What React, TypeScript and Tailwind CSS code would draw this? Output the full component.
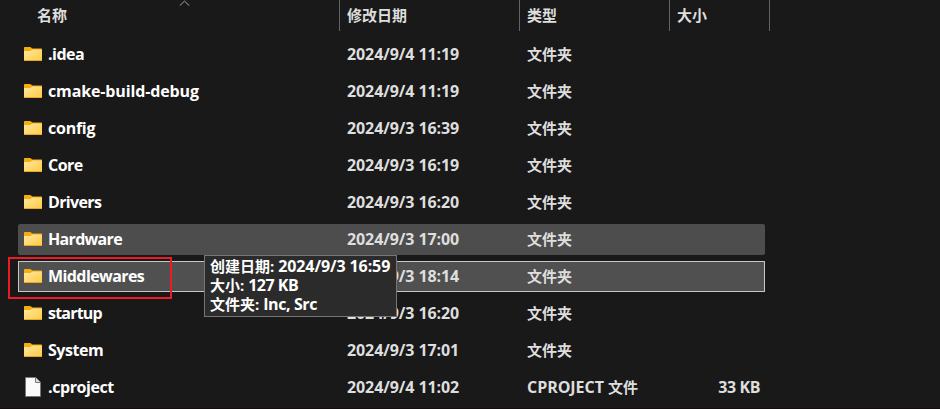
type Entry = {
  name: string;
  date: string;
  type: string;
  extension?: string;
  size?: string;
  state?: 'hover' | 'focus';
  tracking?: string;
};

const entries: Entry[] = [
  { name: '.idea', date: '2024/9/4 11:19', type: '文件夹', tracking: 'tracking-[-0.5px]' },
  { name: 'cmake-build-debug', date: '2024/9/4 11:19', type: '文件夹', tracking: 'tracking-[-0.13px]' },
  { name: 'config', date: '2024/9/3 16:39', type: '文件夹', tracking: 'tracking-[-0.25px]' },
  { name: 'Core', date: '2024/9/3 16:19', type: '文件夹', tracking: 'tracking-[-0.5px]' },
  { name: 'Drivers', date: '2024/9/3 16:20', type: '文件夹', tracking: 'tracking-[-0.65px]' },
  { name: 'Hardware', date: '2024/9/3 17:00', type: '文件夹', state: 'hover', tracking: 'tracking-[-0.68px]' },
  { name: 'Middlewares', date: '2024/9/3 18:14', type: '文件夹', state: 'focus', tracking: 'tracking-[-0.58px]' },
  { name: 'startup', date: '2024/9/3 16:20', type: '文件夹', tracking: 'tracking-[-0.8px]' },
  { name: 'System', date: '2024/9/3 17:01', type: '文件夹', tracking: 'tracking-[-0.45px]' },
  {
    name: '.cproject',
    date: '2024/9/4 11:02',
    type: '文件',
    extension: 'CPROJECT',
    size: '33 KB',
    tracking: 'tracking-[-0.42px]',
  },
];

function FolderIcon() {
  return (
    <svg width="18" height="14" viewBox="0 0 18 14" className="block">
      <defs>
        <linearGradient id="folder" x1="0" y1="0" x2="1" y2="1">
          <stop offset="0" stopColor="#ffe7a2" />
          <stop offset="1" stopColor="#ffcb3f" />
        </linearGradient>
      </defs>
      <path d="M0 .7Q0 0 .7 0H6.4L8.2 1.5H17.3Q18 1.5 18 2.2V6H0Z" fill="#f5ad12" />
      <path d="M0 4H6.3L8.2 2.6H18V13.3Q18 14 17.3 14H.7Q0 14 0 13.3Z" fill="url(#folder)" />
      <path d="M0 13H18V13.4Q18 14 17.3 14H.7Q0 14 0 13.4Z" fill="#e9a825" />
    </svg>
  );
}

function FileIcon() {
  return (
    <svg width="16" height="20" viewBox="0 0 16 20" className="ml-px block">
      <path d="M.5 .5H10.7L15.5 5.3V19.5H.5Z" fill="#fafafa" stroke="#777" />
      <path d="M10.5 .5V5.5H15.5" fill="#dedede" stroke="#777" />
    </svg>
  );
}

function Header() {
  return (
    <div className="flex h-[31px] leading-[30px]">
      <div className="relative w-[340px] border-r border-[#636363] pl-[37px]">
        名称
        <svg width="11" height="6" viewBox="0 0 11 6" className="absolute left-[179px] top-0">
          <path d="M.7 5.7L5.5 1.1L10.3 5.7" fill="none" stroke="#a5a5a5" />
        </svg>
      </div>
      <div className="w-[180px] border-r border-[#636363] pl-[7px]">修改日期</div>
      <div className="w-[150px] border-r border-[#636363] pl-[7px]">类型</div>
      <div className="w-[100px] border-r border-[#636363] pl-[7px]">大小</div>
    </div>
  );
}

function Row({ entry }: { entry: Entry }) {
  const base = 'flex h-[31px] items-center border pb-px leading-[20px] ';
  const look =
    entry.state === 'hover'
      ? 'rounded-[2px] border-[#4d4d4d] bg-[#4d4d4d]'
      : entry.state === 'focus'
        ? 'border-[#c8c8c8] bg-[#505050]'
        : 'border-transparent';
  return (
    <div className={base + look}>
      <div className="ml-[5px] w-6 shrink-0">{entry.size ? <FileIcon /> : <FolderIcon />}</div>
      <div className={'w-[299px] shrink-0 text-[16px] font-[660] text-white ' + (entry.tracking ?? '')}>{entry.name}</div>
      <div className="w-[180px] shrink-0 text-[16px] font-[660] tracking-[-0.09px]">{entry.date}</div>
      <div className="w-[150px] shrink-0">
        {entry.extension && <span className="text-[16px] font-[660] tracking-[-0.05px]">{entry.extension} </span>}
        {entry.type}
      </div>
      <div className="w-[83px] shrink-0 text-right text-[16px] font-[660] tracking-[-0.4px]">{entry.size}</div>
    </div>
  );
}

export default function App() {
  return (
    <div className="relative h-[409px] w-[940px] overflow-hidden whitespace-nowrap border-b border-[#140d10] bg-[#191919] font-['Open_Sans','Noto_Sans_CJK_SC',sans-serif] text-[15px] font-bold text-[#dedede]">
      <Header />
      <div className="ml-[18px] mt-2 flex w-[747px] flex-col gap-1.5">
        {entries.map((entry) => (
          <Row key={entry.name} entry={entry} />
        ))}
      </div>
      <div className="absolute left-2 top-[257px] h-[42px] w-[164px] border-2 border-[#ed1c24]" />
      <div className="absolute left-[204px] top-[255px] h-[62px] w-[193px] border border-[#767676] bg-[#2b2b2b] pl-[5px] pt-px leading-[19px] text-white">
        <div>
          创建日期: <span className="text-[16px] font-[660] tracking-[-0.1px]">2024/9/3 16:59</span>
        </div>
        <div>
          大小: <span className="text-[16px] font-[660] tracking-[-0.5px]">127 KB</span>
        </div>
        <div>
          文件夹: <span className="text-[16px] font-[660] tracking-[-0.4px]">Inc, Src</span>
        </div>
      </div>
    </div>
  );
}
